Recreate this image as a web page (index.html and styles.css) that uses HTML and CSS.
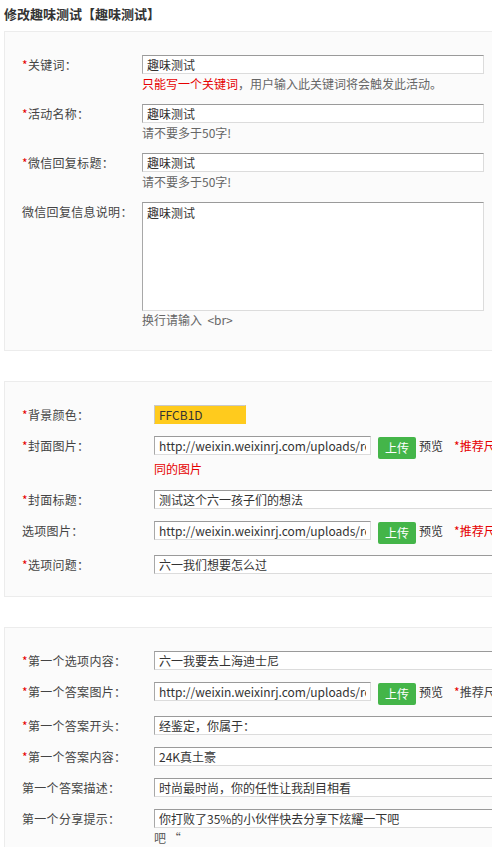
FILE: index.html
```html
<!DOCTYPE html>
<html lang="zh-CN">
<head>
<meta charset="utf-8">
<title>修改趣味测试</title>
<link rel="stylesheet" href="styles.css">
</head>
<body>
<h1 class="page-title">修改趣味测试【趣味测试】</h1>

<div class="panel">
  <div class="row">
    <div class="label label-sm"><span class="req">*</span>关键词：</div>
    <div class="field">
      <input class="text text-md" type="text" value="趣味测试">
      <div class="hint"><span class="red">只能写一个关键词</span>，用户输入此关键词将会触发此活动。</div>
    </div>
  </div>
  <div class="row">
    <div class="label label-sm"><span class="req">*</span>活动名称：</div>
    <div class="field">
      <input class="text text-md" type="text" value="趣味测试">
      <div class="hint">请不要多于50字!</div>
    </div>
  </div>
  <div class="row">
    <div class="label label-sm"><span class="req">*</span>微信回复标题：</div>
    <div class="field">
      <input class="text text-md" type="text" value="趣味测试">
      <div class="hint">请不要多于50字!</div>
    </div>
  </div>
  <div class="row">
    <div class="label label-sm">微信回复信息说明：</div>
    <div class="field">
      <textarea class="area">趣味测试</textarea>
      <div class="hint">换行请输入&nbsp; &lt;br&gt;</div>
    </div>
  </div>
</div>

<div class="panel">
  <div class="row">
    <div class="label label-lg"><span class="req">*</span>背景颜色：</div>
    <div class="field">
      <input class="text text-color" type="text" value="FFCB1D">
    </div>
  </div>
  <div class="row">
    <div class="label label-lg"><span class="req">*</span>封面图片：</div>
    <div class="field">
      <input class="text text-url" type="text" value="http://weixin.weixinrj.com/uploads/regular/2015/0601/cover.jpg"><button class="btn-upload" type="button">上传</button><span class="preview">预览</span><span class="note note-red">*推荐尺寸：640*360，请上传相<br>同的图片</span>
    </div>
  </div>
  <div class="row">
    <div class="label label-lg"><span class="req">*</span>封面标题：</div>
    <div class="field">
      <input class="text text-lg" type="text" value="测试这个六一孩子们的想法">
    </div>
  </div>
  <div class="row">
    <div class="label label-lg">选项图片：</div>
    <div class="field">
      <input class="text text-url" type="text" value="http://weixin.weixinrj.com/uploads/regular/2015/0601/option.jpg"><button class="btn-upload" type="button">上传</button><span class="preview">预览</span><span class="note note-red">*推荐尺寸：640*360</span>
    </div>
  </div>
  <div class="row">
    <div class="label label-lg"><span class="req">*</span>选项问题：</div>
    <div class="field">
      <input class="text text-lg" type="text" value="六一我们想要怎么过">
    </div>
  </div>
</div>

<div class="panel">
  <div class="row">
    <div class="label label-lg"><span class="req">*</span>第一个选项内容：</div>
    <div class="field">
      <input class="text text-lg" type="text" value="六一我要去上海迪士尼">
    </div>
  </div>
  <div class="row">
    <div class="label label-lg"><span class="req">*</span>第一个答案图片：</div>
    <div class="field">
      <input class="text text-url" type="text" value="http://weixin.weixinrj.com/uploads/regular/2015/0601/answer1.jpg"><button class="btn-upload" type="button">上传</button><span class="preview">预览</span><span class="note"><span class="red">*</span>推荐尺寸：640*360</span>
    </div>
  </div>
  <div class="row">
    <div class="label label-lg"><span class="req">*</span>第一个答案开头：</div>
    <div class="field">
      <input class="text text-lg" type="text" value="经鉴定，你属于：">
    </div>
  </div>
  <div class="row">
    <div class="label label-lg"><span class="req">*</span>第一个答案内容：</div>
    <div class="field">
      <input class="text text-lg" type="text" value="24K真土豪">
    </div>
  </div>
  <div class="row">
    <div class="label label-lg">第一个答案描述：</div>
    <div class="field">
      <input class="text text-lg" type="text" value="时尚最时尚，你的任性让我刮目相看">
    </div>
  </div>
  <div class="row">
    <div class="label label-lg">第一个分享提示：</div>
    <div class="field">
      <input class="text text-lg" type="text" value="你打败了35%的小伙伴快去分享下炫耀一下吧">
      <div class="hint hint-dark">吧 “</div>
    </div>
  </div>
</div>
</body>
</html>
```

FILE: styles.css
```css
html, body {
  overflow: hidden;
}

body {
  margin: 0;
  padding: 4px 0 0 4px;
  background: #ffffff;
  color: #444444;
  font-family: "Noto Sans CJK SC", "Noto Sans", sans-serif;
  font-size: 12px;
}

.page-title {
  margin: 0 0 7px;
  font-size: 13px;
  line-height: 20px;
  font-weight: bold;
  color: #333333;
}

.panel {
  width: 700px;
  box-sizing: border-box;
  margin-bottom: 30px;
  padding: 23px 0 21px 17px;
  background: #fbfbfb;
  border: 1px solid #ececec;
  display: flex;
  flex-direction: column;
  gap: 11px;
}

.row {
  display: flex;
  align-items: flex-start;
}

.label {
  flex: none;
  line-height: 20px;
  color: #444444;
  white-space: nowrap;
  letter-spacing: 0.3px;
}

.label-sm {
  width: 120px;
}

.label-lg {
  width: 132px;
}

.req,
.red {
  color: #e60000;
}

.field {
  flex: 1;
  min-width: 0;
  line-height: 20px;
}

.text {
  display: inline-block;
  vertical-align: top;
  box-sizing: border-box;
  height: 19px;
  margin: 0;
  padding: 0 4px;
  border: 1px solid;
  border-color: #9a9a9a #dcdcdc #dcdcdc #a8a8a8;
  background: #ffffff;
  color: #333333;
  font-family: inherit;
  font-size: 12px;
  outline: none;
}

.text-md {
  width: 342px;
}

.text-lg {
  width: 420px;
}

.text-url {
  width: 217px;
}

.text-color {
  width: 92px;
  background: #ffcb1d;
  border-color: #c9c9c9 #ffcb1d #ffcb1d #c9c9c9;
}

.area {
  display: block;
  box-sizing: border-box;
  width: 342px;
  height: 109px;
  margin: 0;
  padding: 2px 4px;
  border: 1px solid;
  border-color: #9a9a9a #dcdcdc #dcdcdc #a8a8a8;
  background: #ffffff;
  color: #333333;
  font-family: inherit;
  font-size: 12px;
  line-height: 16px;
  resize: none;
  outline: none;
}

.hint {
  line-height: 18px;
  color: #666666;
}

.hint-dark {
  color: #555555;
}

.btn-upload {
  display: inline-block;
  vertical-align: top;
  box-sizing: border-box;
  height: 22px;
  margin: 1px 0 0 7px;
  padding: 0 7px;
  border: 0;
  border-radius: 2px;
  background: #44b549;
  color: #ffffff;
  font-family: inherit;
  font-size: 12px;
  line-height: 22px;
}

.preview {
  margin-left: 3px;
  color: #333333;
}

.note {
  margin-left: 11px;
  color: #444444;
}

.note-red {
  color: #e60000;
}
```
